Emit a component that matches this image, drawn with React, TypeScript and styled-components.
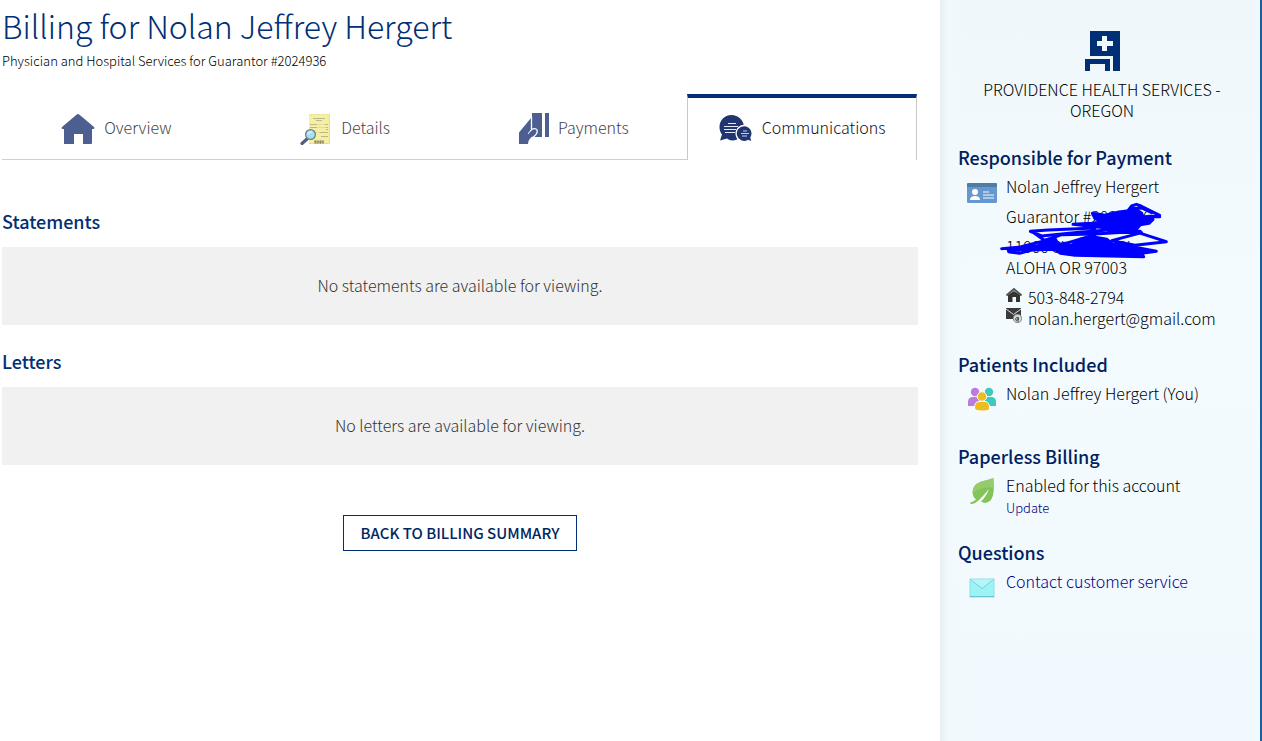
import React from "react";
import styled, { createGlobalStyle } from "styled-components";

const Global = createGlobalStyle`
  *, *::before, *::after { box-sizing: border-box; }
  body { margin: 0; background: #fff; color: #000; font-family: "Noto Sans CJK SC", "Open Sans", sans-serif; font-size: 16px; font-weight: 300; line-height: 21px; }
  h1, h2, p { margin: 0; }
`;
const Page = styled.div`
  display: flex;
  align-items: stretch;
  min-height: 100vh;
`;
const Main = styled.main`
  flex: 1;
  min-width: 0;
  padding: 4px 22px 24px 2px;
`;
const Title = styled.h1`
  color: #002f75;
  font-size: 32px;
  line-height: 42px;
  font-weight: 300;
`;
const Subtitle = styled.p`
  padding-top: 4px;
  font-size: 13px;
  line-height: 22px;
`;
const Tabs = styled.nav`
  display: grid;
  grid-template-columns: repeat(4, 1fr);
  margin: 22px 1px 0 0;
`;
const Tab = styled.a<{ $active?: boolean }>`
  display: flex;
  align-items: center;
  justify-content: center;
  gap: 9px;
  height: 66px;
  padding-bottom: ${(p) => (p.$active ? "3px" : "2px")};
  margin-left: ${(p) => (p.$active ? "-1px" : "0")};
  border-style: solid;
  border-width: ${(p) => (p.$active ? "4px 1px 0" : "4px 0 1px")};
  border-color: ${(p) => (p.$active ? "#002f75 #c8c8c8" : "transparent transparent #d0d0d0")};
  color: ${(p) => (p.$active ? "#111" : "#444")};
  text-decoration: none;

  svg { margin-top: 2px; }
`;
const Section = styled.section<{ $first?: boolean }>`
  margin-top: ${(p) => (p.$first ? "49px" : "24px")};
`;
const Heading = styled.h2`
  color: #002f75;
  font-size: 18px;
  line-height: 24px;
  font-weight: 500;
`;
const Empty = styled.p`
  display: flex;
  align-items: center;
  justify-content: center;
  height: 78px;
  margin-top: 14px;
  padding-bottom: 2px;
  background: #f1f1f1;
  color: #333;
`;
const Actions = styled.div`
  display: flex;
  justify-content: center;
  margin-top: 50px;
`;
const BackButton = styled.button`
  height: 36px;
  padding: 0 17px 2px;
  border: 1px solid #002f75;
  background: #fff;
  color: #002663;
  font: 500 15px/21px "Noto Sans CJK SC", "Open Sans", sans-serif;
`;
const Side = styled.aside`
  flex: 0 0 322px;
  padding: 30px 14px 24px 18px;
  border-right: 2px solid #1c5f9e;
  background: linear-gradient(90deg, #e6eef1 0, #f1f9fc 8px, rgba(241, 249, 252, 0) 24px), linear-gradient(180deg, #f0f7fb 0, #f4fbfe 40%, #f0f9fd 100%);
`;
const Org = styled.div`
  display: flex;
  flex-direction: column;
  align-items: center;
  gap: 8px;
  padding: 0 16px;
  text-align: center;
`;
const SideHeading = styled(Heading)`
  color: #00205f;
`;
const SideBlock = styled.section<{ $gap: number }>`
  margin-top: ${(p) => p.$gap}px;
`;
const Row = styled.div`
  display: grid;
  grid-template-columns: 48px 1fr;
  margin-top: 7px;
`;
const RowIcon = styled.div<{ $drop: number }>`
  display: flex;
  justify-content: center;
  align-items: flex-start;
  height: 36px;
  padding-top: ${(p) => p.$drop}px;
`;
const Lines = styled.div`
  position: relative;
`;
const Group = styled.div`
  margin-bottom: 9px;
`;
const Contact = styled.div`
  display: flex;
  gap: 6px;
`;
const Link = styled.a<{ $small?: boolean }>`
  color: #00008b;
  text-decoration: none;
  font-size: ${(p) => (p.$small ? "13px" : "16px")};
`;
const Scribble = styled.svg`
  position: absolute;
  left: -11px;
  top: 24px;
`;

const HomeIcon = () => (
  <svg width="34" height="31" viewBox="0 0 34 31" fill="#4d5e90">
    <path d="M17 1Q17.700 1 18.500 1.700L33 14Q34 16 32 16H31V30Q31 31 30 31H22V21H13V31H3V16H2Q0 16 1 14L15.500 1.700Q16.300 1 17 1Z" />
  </svg>
);
const DetailsIcon = () => (
  <svg width="32" height="32" viewBox="0 0 32 32" fill="none">
    <path d="M9 1H30V31H9Z" fill="#f5efa4" />
    <path d="M9 1.500H30" stroke="#dedbb8" strokeDasharray="1 1" />
    <path d="M29.500 2V30.500H9" stroke="#e9df88" />
    <path d="M13 5.500H25M16 7.500H22M10 11.500H17M25 11.500H28M10 14.500H17M26 14.500H28M26 16.500H28M20 19.500H28M21 23.500H28" stroke="#bcb888" />
    <path d="M17 11.500H25M17 14.500H26M16 19.500H20" stroke="#e3dd9f" />
    <path d="M14 29H24" stroke="#b5b07a" strokeWidth="3" />
    <path d="M15 29H24" stroke="#8f8b66" strokeWidth="3" strokeDasharray="1 1.500" />
    <path d="M7 26L2 30.500" stroke="#4f6082" strokeWidth="3.200" strokeLinecap="round" />
    <circle cx="10.500" cy="21.500" r="4.900" fill="#a5e1e6" stroke="#6c7f95" strokeWidth="1.300" />
    <path d="M8 21Q9 18.500 12 19" stroke="#d9f5f7" strokeWidth="1.500" />
  </svg>
);
const PaymentsIcon = () => (
  <svg width="30" height="31" viewBox="0 0 30 31" fill="#4d5e90">
    <path d="M13 0H23V24H13ZM26 0H30V24H26Z" />
    <path d="M0 31V19.500L12 5V17L10 20L13 17Q16 15 17.500 17.500Q18.500 20 15 23L11 25.500Q9.500 27 9 31Z" />
    <path d="M12.500 4V16.500Q16.500 14.500 18 17Q19 20 15.500 23Q14 24.500 12 25" fill="none" stroke="#fff" strokeWidth="1.300" />
    <path d="M12 17L9 21" fill="none" stroke="#fff" strokeWidth="1" />
  </svg>
);
const ChatIcon = () => (
  <svg width="34" height="29" viewBox="0 0 34 29">
    <path d="M12.500 1C5 1 .5 7 .5 13C.5 16 1.500 18.500 3 20.500L1 26.500L8 24.500Q12 28 18 25.500Q25 22 25 13C25 6 19 1 12.500 1Z" fill="#213570" />
    <path d="M9 9.500H17M5 12.500H19M5 15.500H17M6 18.500H16" stroke="#e7eaf3" strokeWidth="1.200" />
    <path d="M25 11.500A8 8 0 1 0 29 26.500L33 28L32 23.500A8 8 0 0 0 25 11.500Z" fill="#213570" stroke="#fff" strokeWidth="1.300" />
    <path d="M24 17H28M22 19.500H30M23 22H28" stroke="#c9d0e2" strokeWidth="1.200" />
  </svg>
);
const HospitalIcon = () => (
  <svg width="35" height="41" viewBox="0 0 35 41" fill="#002f75">
    <path d="M5 1H35V41H28V26H5Z" />
    <path d="M0 29H25V41H20V34H5V41H0Z" />
    <path d="M17 6H22V11H28V16H22V21H17V16H12V11H17Z" fill="#f1f8fb" />
  </svg>
);
const CardIcon = () => (
  <svg width="30" height="22" viewBox="0 0 30 22">
    <rect y="1" width="30" height="20" rx="1.500" fill="#6697ce" />
    <path d="M0 5V2Q0 1 1.500 1H28.500Q30 1 30 2V5Z" fill="#4c7da6" />
    <circle cx="8" cy="10" r="3" fill="#fff" />
    <path d="M3 18Q3 14 8 14Q13 14 13 18Z" fill="#fff" />
    <path d="M16 10H22M16 13H27M16 16H27" stroke="#c5dcf2" strokeWidth="1.500" />
  </svg>
);
const PeopleIcon = () => (
  <svg width="30" height="26" viewBox="0 0 30 26">
    <g fill="#bd7be0"><circle cx="8" cy="6" r="4.200" /><path d="M1 20V16Q1 11 6 11H9Q14 11 14 20Z" /></g>
    <g fill="#3bcabb"><circle cx="22" cy="6" r="4.200" /><path d="M16 20Q16 11 21 11H24Q29 11 29 16V20Z" /></g>
    <g fill="#edbd1d" stroke="#f6fbfd"><circle cx="15" cy="10.500" r="4.700" /><path d="M7.500 22Q7.500 15.500 12 15.500H18Q22.500 15.500 22.500 22V23Q22 25 15 25Q7.500 25 7.500 22Z" /></g>
  </svg>
);
const LeafIcon = () => (
  <svg width="26" height="28" viewBox="0 0 26 28">
    <path d="M24.500 1Q18 3 12 4.500Q3 8 3.500 16Q4 20 7 22.500Q4 25 1 25.500Q1 27 3 27Q7 26 10 23Q15 18 20 12Q17 20 12 24.500Q17 28 22 23Q26 17 24.500 1Z" fill="#82c455" />
    <path d="M24.500 1Q18 3 12 4.500Q3 8 3.500 16Q15 8 25 11Z" fill="#a2d17d" opacity=".6" />
  </svg>
);
const EnvelopeIcon = () => (
  <svg width="26" height="20" viewBox="0 0 26 20">
    <rect x="1" y="1" width="24" height="18" fill="#9cf3f5" stroke="#8fdfe6" />
    <path d="M1.500 1.500L13 10.500L24.500 1.500" fill="#b4f7f8" stroke="#7fcdd6" />
    <path d="M1 18.500H25" stroke="#6cc3cf" />
  </svg>
);
const SmallHome = () => (
  <svg width="16" height="16" viewBox="0 0 16 16">
    <path d="M2 8L8 4L14 8V15H10V10H6.500V15H2Z" fill="#333" />
    <path d="M.5 8.500L8 2L15.500 8.500" fill="none" stroke="#555" strokeWidth="2" />
  </svg>
);
const SmallMail = () => (
  <svg width="16" height="16" viewBox="0 0 16 16">
    <path d="M0 0H15V11H0Z" fill="#3b3b3b" />
    <path d="M0 1L7.500 6.500L15 1" fill="none" stroke="#d8dcde" />
    <circle cx="11.500" cy="10.500" r="4.200" fill="#d5d9db" stroke="#888" />
    <path d="M13 13Q10 14 9.500 11Q10 8.500 12.500 9.500V12Q11 12.500 11 11Q11.500 10 12.500 10.500" fill="none" stroke="#444" strokeWidth=".9" />
  </svg>
);
const PenMarks = () => (
  <Scribble width="180" height="62" viewBox="0 0 540 186" fill="none" stroke="#0000fe" strokeWidth="9" strokeLinecap="round" strokeLinejoin="round">
    <path fill="#0000fe" d="M292 40L330 46L372 36L402 32L420 26L440 40L446 56L474 58L462 70L436 74L424 88L370 88L300 80L234 73L290 70L322 66L300 56Z" />
    <path d="M396 36L410 18L424 13L438 18L494 46L450 50M404 26L440 24L470 38M440 50L494 50" />
    <path d="M300 84L160 90L106 94L140 108L260 96L340 90L436 94L300 102L200 104L150 122L110 94M340 92L430 98L514 125L420 136L350 122L440 98" />
    <path fill="#0000fe" d="M100 144L130 138L152 120L178 112L190 134L230 136L256 118L300 112L336 118L352 132L384 134L420 142L484 154L440 160L446 170L240 166L196 160L180 148L104 150Z" />
    <path d="M20 146L70 142L150 122M40 152L90 142L180 132M44 156L74 160L130 144L220 128L300 104M60 150L130 146" />
  </Scribble>
);

const App = () => (
  <>
    <Global />
    <Page>
      <Main>
        <Title>Billing for Nolan Jeffrey Hergert</Title>
        <Subtitle>Physician and Hospital Services for Guarantor #2024936</Subtitle>
        <Tabs aria-label="Billing">
          <Tab href="#overview"><HomeIcon />Overview</Tab>
          <Tab href="#details"><DetailsIcon />Details</Tab>
          <Tab href="#payments"><PaymentsIcon />Payments</Tab>
          <Tab href="#communications" $active aria-current="page"><ChatIcon />Communications</Tab>
        </Tabs>
        <Section $first>
          <Heading>Statements</Heading>
          <Empty>No statements are available for viewing.</Empty>
        </Section>
        <Section>
          <Heading>Letters</Heading>
          <Empty>No letters are available for viewing.</Empty>
        </Section>
        <Actions><BackButton type="button">BACK TO BILLING SUMMARY</BackButton></Actions>
      </Main>
      <Side>
        <Org><HospitalIcon /><p>PROVIDENCE HEALTH SERVICES - OREGON</p></Org>
        <SideBlock $gap={24}>
          <SideHeading>Responsible for Payment</SideHeading>
          <Row>
            <RowIcon $drop={6}><CardIcon /></RowIcon>
            <Lines>
              <Group>Nolan Jeffrey Hergert</Group>
              <Group>Guarantor #2024936</Group>
              <Group><div>11000 SW 0000 PL</div><div>ALOHA OR 97003</div></Group>
              <Contact><SmallHome />503-848-2794</Contact>
              <Contact><SmallMail />nolan.hergert@gmail.com</Contact>
              <PenMarks />
            </Lines>
          </Row>
        </SideBlock>
        <SideBlock $gap={23}>
          <SideHeading>Patients Included</SideHeading>
          <Row><RowIcon $drop={3}><PeopleIcon /></RowIcon><Lines>Nolan Jeffrey Hergert (You)</Lines></Row>
        </SideBlock>
        <SideBlock $gap={25}>
          <SideHeading>Paperless Billing</SideHeading>
          <Row><RowIcon $drop={2}><LeafIcon /></RowIcon><Lines><div>Enabled for this account</div><Link $small href="#update">Update</Link></Lines></Row>
        </SideBlock>
        <SideBlock $gap={22}>
          <SideHeading>Questions</SideHeading>
          <Row><RowIcon $drop={7}><EnvelopeIcon /></RowIcon><Lines><Link href="#contact">Contact customer service</Link></Lines></Row>
        </SideBlock>
      </Side>
    </Page>
  </>
);
export default App;
